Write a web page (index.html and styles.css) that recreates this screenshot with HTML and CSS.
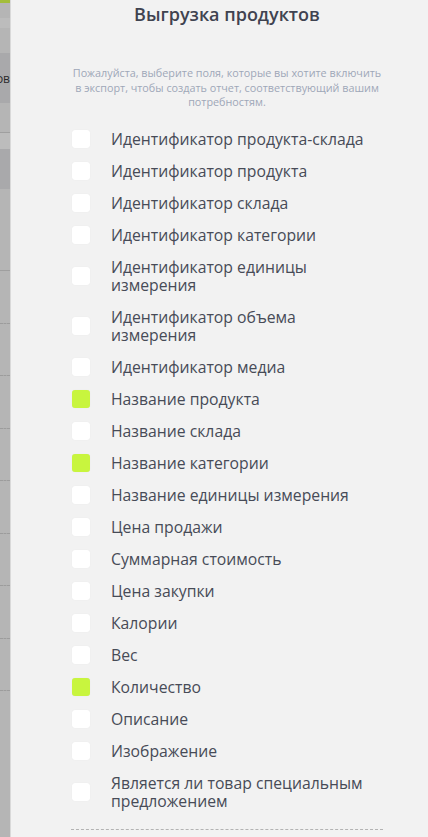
FILE: index.html
```html
<!DOCTYPE html>
<html lang="ru">
<head>
<meta charset="utf-8">
<title>Выгрузка продуктов</title>
<link rel="stylesheet" href="styles.css">
</head>
<body>
<div class="backdrop">
  <div class="bd-accent"></div>
  <div class="bd-block bd-h15"></div>
  <div class="bd-block bd-light bd-h10"></div>
  <div class="bd-block bd-h25"></div>
  <div class="bd-block bd-dark bd-h50"><span class="bd-text">Продуктов</span></div>
  <div class="bd-block bd-h30 bd-line"></div>
  <div class="bd-block bd-light bd-h16"></div>
  <div class="bd-block bd-dark bd-h40"></div>
  <div class="bd-block bd-h82 bd-line"></div>
  <div class="bd-block bd-h52 bd-dash"></div>
  <div class="bd-block bd-h52 bd-dash"></div>
  <div class="bd-block bd-h52 bd-dash"></div>
  <div class="bd-block bd-h52 bd-dash"></div>
  <div class="bd-block bd-h52 bd-dash"></div>
  <div class="bd-block bd-h52 bd-dash"></div>
  <div class="bd-block bd-h52 bd-dash"></div>
  <div class="bd-block bd-h52 bd-dash"></div>
  <div class="bd-block bd-fill"></div>
</div>
<main class="panel">
  <div class="content">
    <h1 class="title">Выгрузка продуктов</h1>
    <p class="subtitle">Пожалуйста, выберите поля, которые вы хотите включить в экспорт, чтобы создать отчет, соответствующий вашим потребностям.</p>
    <ul class="fields">
      <li class="field"><span class="box"></span><span class="label">Идентификатор продукта-склада</span></li>
      <li class="field"><span class="box"></span><span class="label">Идентификатор продукта</span></li>
      <li class="field"><span class="box"></span><span class="label">Идентификатор склада</span></li>
      <li class="field"><span class="box"></span><span class="label">Идентификатор категории</span></li>
      <li class="field"><span class="box"></span><span class="label">Идентификатор единицы измерения</span></li>
      <li class="field"><span class="box"></span><span class="label">Идентификатор объема измерения</span></li>
      <li class="field"><span class="box"></span><span class="label">Идентификатор медиа</span></li>
      <li class="field"><span class="box checked"></span><span class="label">Название продукта</span></li>
      <li class="field"><span class="box"></span><span class="label">Название склада</span></li>
      <li class="field"><span class="box checked"></span><span class="label">Название категории</span></li>
      <li class="field"><span class="box"></span><span class="label">Название единицы измерения</span></li>
      <li class="field"><span class="box"></span><span class="label">Цена продажи</span></li>
      <li class="field"><span class="box"></span><span class="label">Суммарная стоимость</span></li>
      <li class="field"><span class="box"></span><span class="label">Цена закупки</span></li>
      <li class="field"><span class="box"></span><span class="label">Калории</span></li>
      <li class="field"><span class="box"></span><span class="label">Вес</span></li>
      <li class="field"><span class="box checked"></span><span class="label">Количество</span></li>
      <li class="field"><span class="box"></span><span class="label">Описание</span></li>
      <li class="field"><span class="box"></span><span class="label">Изображение</span></li>
      <li class="field"><span class="box"></span><span class="label">Является ли товар специальным предложением</span></li>
    </ul>
    <hr class="divider">
  </div>
</main>
</body>
</html>
```
FILE: styles.css
```css
* { box-sizing: border-box; }

html, body {
  margin: 0;
  padding: 0;
  height: 837px;
  overflow: hidden;
}

body {
  display: flex;
  background: #f2f2f2;
  font-family: "Open Sans", "Noto Sans", sans-serif;
}

/* dimmed page behind the drawer */
.backdrop {
  width: 10px;
  flex: 0 0 10px;
  display: flex;
  flex-direction: column;
  background: #b5b5b5;
  overflow: hidden;
}
.bd-accent { height: 3px; background: #a3bd3a; }
.bd-block { display: flex; justify-content: flex-end; align-items: center; overflow: hidden; }
.bd-light { background: #bcbcbc; }
.bd-dark { background: #a9a9ab; }
.bd-h10 { height: 10px; }
.bd-h15 { height: 15px; }
.bd-h16 { height: 16px; }
.bd-h25 { height: 25px; }
.bd-h30 { height: 30px; }
.bd-h40 { height: 40px; }
.bd-h50 { height: 50px; }
.bd-h52 { height: 52.5px; }
.bd-h82 { height: 82px; }
.bd-line { border-bottom: 1px solid #9f9f9f; }
.bd-dash { border-bottom: 1px dashed #9c9c9c; }
.bd-fill { flex: 1; }
.bd-text {
  font-size: 12px;
  color: #2b2b2b;
  white-space: nowrap;
  flex: 0 0 auto;
}

.panel {
  flex: 1;
  border-left: 1px solid #d9d9d9;
  background: #f2f2f2;
  padding: 0 45px 0 60px;
}

.content {
  width: 312px;
}

.title {
  margin: 2px 0 0;
  font-size: 18px;
  line-height: 24px;
  font-weight: 600;
  color: #3f4350;
  text-align: center;
}

.subtitle {
  margin: 40px -2px 0;
  font-size: 10.8px;
  line-height: 14.5px;
  color: #9ea7b8;
  text-align: center;
}

.fields {
  list-style: none;
  margin: 20px 0 0;
  padding: 0;
  display: flex;
  flex-direction: column;
  gap: 14px;
}

.field {
  display: flex;
  align-items: center;
  gap: 21px;
  padding-left: 1px;
}

.box {
  flex: 0 0 18px;
  width: 18px;
  height: 18px;
  border-radius: 3px;
  background: #ffffff;
  box-shadow: 0 0 1px rgba(0, 0, 0, 0.08);
}
.box.checked { background: #c8f53e; }

.label {
  max-width: 262px;
  font-size: 15.75px;
  line-height: 18px;
  color: #474b57;
}

.divider {
  margin: 19px 0 0;
  border: 0;
  border-top: 1px dashed #b3b3b3;
}
```
